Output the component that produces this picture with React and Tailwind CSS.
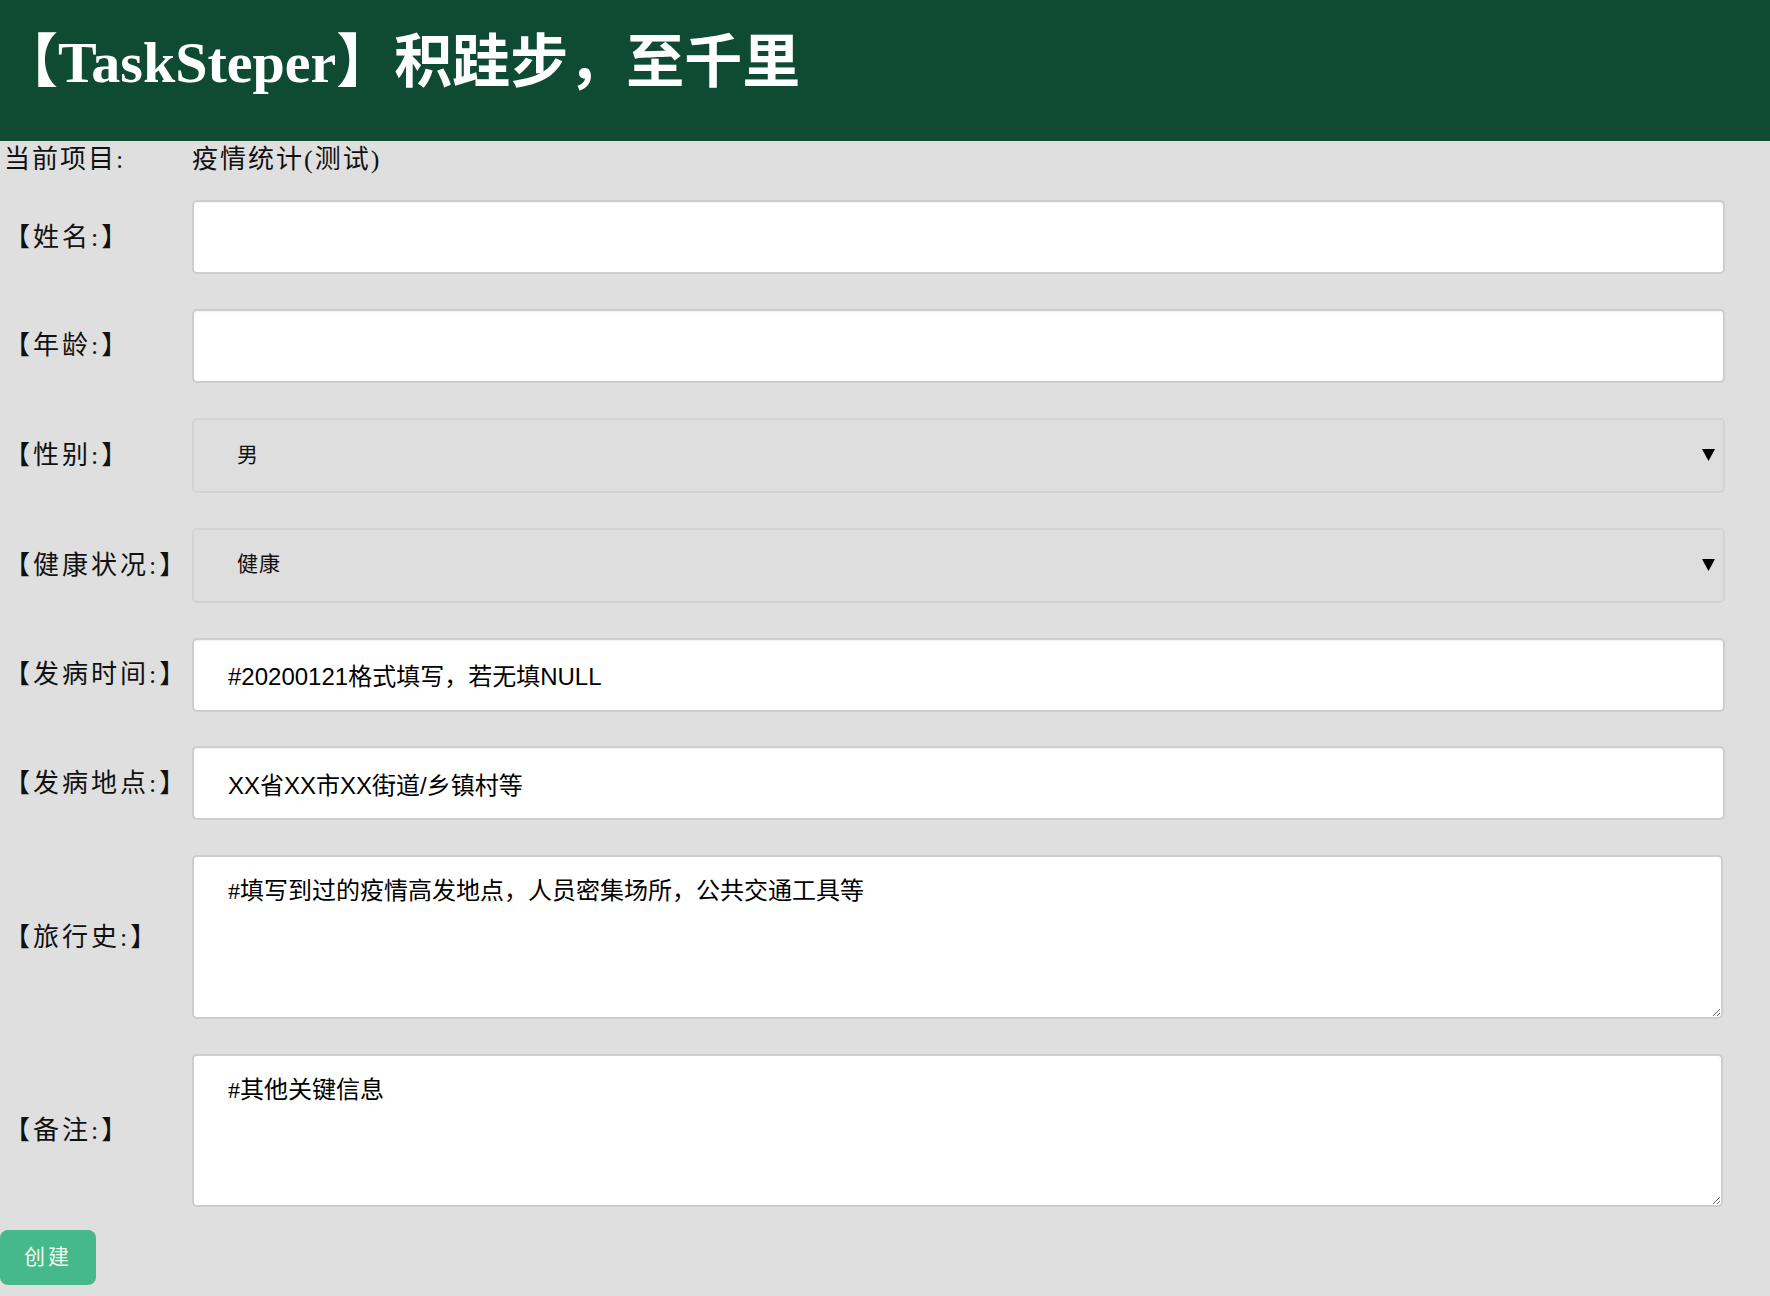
import { useState } from 'react';

const labelFont = "font-['Liberation_Serif','Noto_Sans_CJK_SC',serif]";
const fieldFont = "font-['Liberation_Sans','Noto_Sans_CJK_SC',sans-serif]";

function Row({ label, children }) {
  return (
    <div className="flex items-center">
      <label className={`w-[192px] shrink-0 pl-[4px] text-[26px] tracking-[3px] text-[#111] ${labelFont}`}>{label}</label>
      {children}
    </div>
  );
}

function Select({ value, options, onChange }) {
  return (
    <div className="relative w-[1533px]">
      <select
        value={value}
        onChange={(e) => onChange(e.target.value)}
        className={`h-[75px] w-full appearance-none rounded-[5px] border-2 border-[#d3d3d3] bg-[#dedede] pl-[43px] text-[21px] tracking-[1px] text-[#111] outline-none ${labelFont}`}
      >
        {options.map((o) => (
          <option key={o} value={o}>{o}</option>
        ))}
      </select>
      {/* 下拉箭头 */}
      <svg className="pointer-events-none absolute right-[10px] top-1/2 -translate-y-1/2" width="13" height="12" viewBox="0 0 13 12">
        <path d="M0 0 L13 0 L6.5 12 Z" fill="#000" />
      </svg>
    </div>
  );
}

export default function App() {
  const [form, setForm] = useState({
    name: '',
    age: '',
    gender: '男',
    health: '健康',
    onset: '#20200121格式填写，若无填NULL',
    place: 'XX省XX市XX街道/乡镇村等',
    travel: '#填写到过的疫情高发地点，人员密集场所，公共交通工具等',
    note: '#其他关键信息'
  });

  const update = (key, value) => setForm((prev) => ({ ...prev, [key]: value }));

  const inputCls = `h-[74px] w-[1533px] rounded-[5px] border-2 border-[#cdcdcd] bg-white pl-[34px] text-[24px] text-black outline-none shadow-[inset_0_1px_2px_rgba(0,0,0,0.06)] ${fieldFont}`;
  const areaCls = `block w-[1531px] rounded-[5px] border-2 border-[#cdcdcd] bg-white pl-[34px] pt-[18px] text-[24px] leading-[32px] text-black outline-none ${labelFont}`;

  return (
    <div className="min-h-screen bg-[#dfdfdf]">
      {/* 标题栏 */}
      <header className="flex h-[141px] items-center bg-[#0f4b33]">
        <h1 className={`pb-[16px] text-[58px] font-bold leading-none text-white ${labelFont}`}>
          【TaskSteper】积跬步，至千里
        </h1>
      </header>

      {/* 当前项目 */}
      <div className={`flex h-[36px] items-center text-[26px] tracking-[2px] text-[#111] ${labelFont}`}>
        <span className="w-[192px] pl-[4px]">当前项目:</span>
        <span>疫情统计(测试)</span>
      </div>

      <div className="mt-[23px] flex flex-col gap-[34.9px]">
        <Row label="【姓名:】">
          <input className={inputCls} value={form.name} onChange={(e) => update('name', e.target.value)} />
        </Row>
        <Row label="【年龄:】">
          <input className={inputCls} value={form.age} onChange={(e) => update('age', e.target.value)} />
        </Row>
        <Row label="【性别:】">
          <Select value={form.gender} options={['男', '女']} onChange={(v) => update('gender', v)} />
        </Row>
        <Row label="【健康状况:】">
          <Select value={form.health} options={['健康', '疑似', '确诊', '治愈']} onChange={(v) => update('health', v)} />
        </Row>
        <Row label="【发病时间:】">
          <input className={inputCls} value={form.onset} onChange={(e) => update('onset', e.target.value)} />
        </Row>
        <Row label="【发病地点:】">
          <input className={inputCls} value={form.place} onChange={(e) => update('place', e.target.value)} />
        </Row>
        <Row label="【旅行史:】">
          <textarea className={`${areaCls} h-[164px]`} value={form.travel} onChange={(e) => update('travel', e.target.value)} />
        </Row>
        <Row label="【备注:】">
          <textarea className={`${areaCls} h-[153px]`} value={form.note} onChange={(e) => update('note', e.target.value)} />
        </Row>
      </div>

      <button className={`mt-[23px] h-[55px] w-[96px] rounded-[8px] bg-[#47b88a] text-[21px] tracking-[3px] text-[#eefaf3] ${labelFont}`}>
        创建
      </button>
    </div>
  );
}
